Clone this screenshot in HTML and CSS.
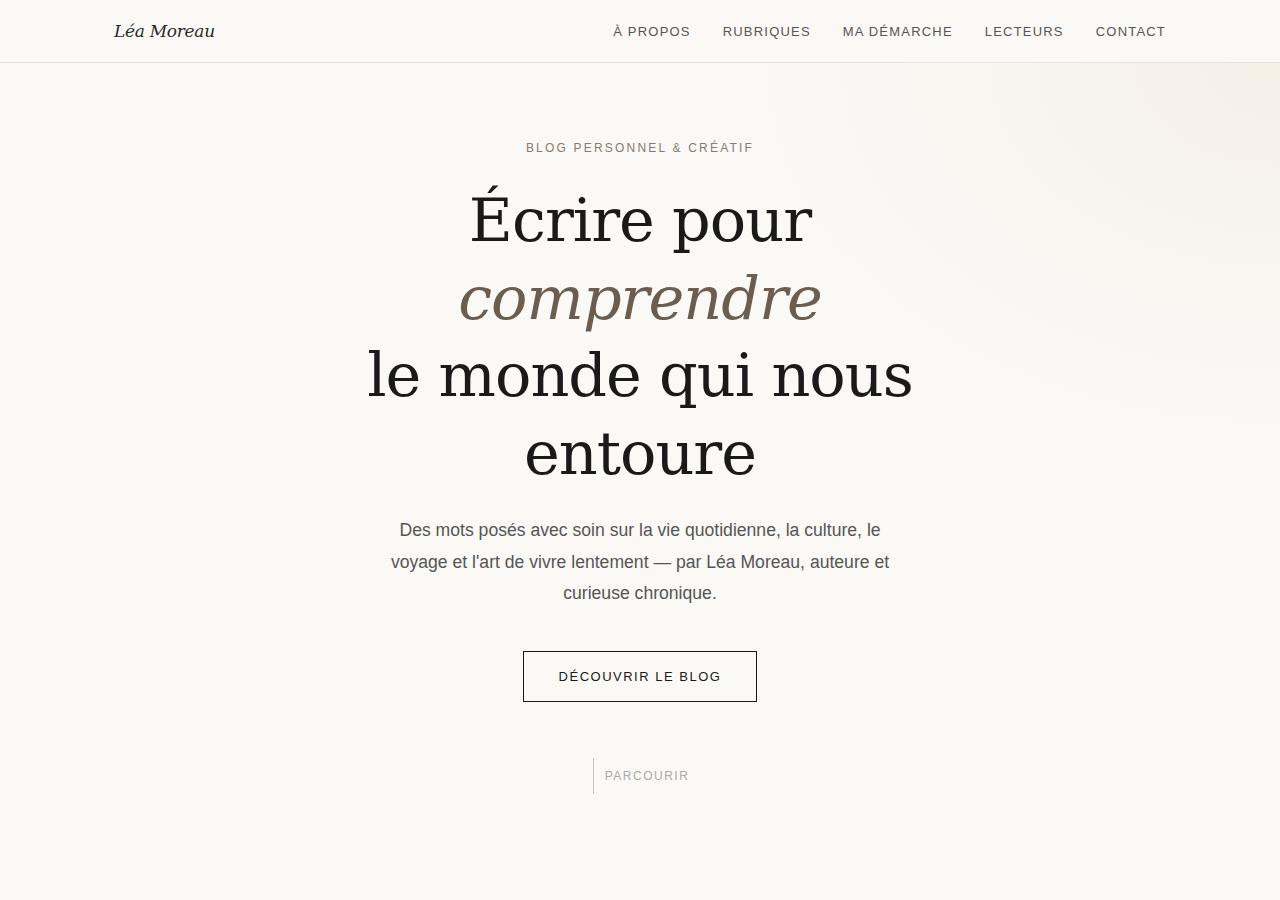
FILE: index.html
```html
<!DOCTYPE html>
<html lang="fr">
<head>
<meta charset="utf-8">
<title>Léa Moreau — Blog personnel</title>
<link rel="stylesheet" href="styles.css">
</head>
<body>
<header class="site-header">
  <div class="container header-inner">
    <a class="logo" href="#">Léa Moreau</a>
    <nav class="nav">
      <a href="#">À propos</a>
      <a href="#">Rubriques</a>
      <a href="#">Ma démarche</a>
      <a href="#">Lecteurs</a>
      <a href="#">Contact</a>
    </nav>
  </div>
</header>
<main class="hero">
  <div class="hero-glow"></div>
  <p class="eyebrow">Blog personnel &amp; créatif</p>
  <h1 class="title">Écrire pour<br><em>comprendre</em><br>le monde qui nous<br>entoure</h1>
  <p class="lead">Des mots posés avec soin sur la vie quotidienne, la culture, le voyage et l'art de vivre lentement — par Léa Moreau, auteure et curieuse chronique.</p>
  <a class="btn" href="#">Découvrir le blog</a>
  <div class="scroll"><span class="scroll-line"></span><span class="scroll-text">Parcourir</span></div>
</main>
</body>
</html>
```
FILE: styles.css
```css
* { box-sizing: border-box; }
html, body { margin: 0; padding: 0; }
body {
  background: #faf9f6;
  color: #1a1a1a;
  font-family: "Liberation Sans", Arial, sans-serif;
  min-height: 900px;
  overflow: hidden;
}
a { text-decoration: none; color: inherit; }
.container { max-width: 1100px; margin: 0 auto; padding: 0 24px; }
.site-header {
  height: 63px;
  border-bottom: 1px solid #e6e3dc;
  position: relative;
  z-index: 2;
}
.header-inner {
  height: 62px;
  display: flex;
  align-items: center;
  justify-content: space-between;
}
.logo {
  font-family: "DejaVu Serif", Georgia, serif;
  font-style: italic;
  font-size: 17px;
  color: #2a2a2a;
  letter-spacing: -0.3px;
}
.nav { display: flex; gap: 32px; }
.nav a {
  font-size: 13px;
  letter-spacing: 1.2px;
  text-transform: uppercase;
  color: #555;
}
.hero {
  position: relative;
  display: flex;
  flex-direction: column;
  align-items: center;
  text-align: center;
  padding-top: 78px;
}
.hero-glow {
  position: absolute;
  top: 0; right: 0;
  width: 600px; height: 420px;
  background: radial-gradient(ellipse at 100% 0%, rgba(238,228,210,0.45) 0%, rgba(240,232,218,0.2) 35%, rgba(250,249,246,0) 65%);
  pointer-events: none;
}
.eyebrow {
  position: relative;
  margin: 0;
  font-size: 12px;
  letter-spacing: 2.2px;
  text-transform: uppercase;
  color: #857b70;
}
.title {
  position: relative;
  margin: 27px 0 0;
  font-family: "DejaVu Serif", Georgia, serif;
  font-weight: 400;
  font-size: 60.5px;
  line-height: 77.5px;
  color: #1a1a1a;
  letter-spacing: -1px;
}
.title em { font-style: italic; color: #6b5e50; }
.lead {
  position: relative;
  margin: 23px 0 0;
  max-width: 520px;
  font-size: 17.6px;
  line-height: 31.6px;
  color: #555;
}
.btn {
  position: relative;
  margin-top: 41px;
  width: 234px;
  height: 51px;
  display: flex;
  align-items: center;
  justify-content: center;
  border: 1px solid #1a1a1a;
  font-size: 13px;
  letter-spacing: 1.5px;
  text-transform: uppercase;
  color: #1a1a1a;
}
.scroll {
  position: relative;
  margin-top: 56px;
  margin-left: 2px;
  display: flex;
  align-items: center;
  gap: 11px;
}
.scroll-line { width: 1px; height: 36px; background: #c9c6c0; }
.scroll-text {
  font-size: 12px;
  letter-spacing: 1.5px;
  text-transform: uppercase;
  color: #aaa9ab;
}
```
